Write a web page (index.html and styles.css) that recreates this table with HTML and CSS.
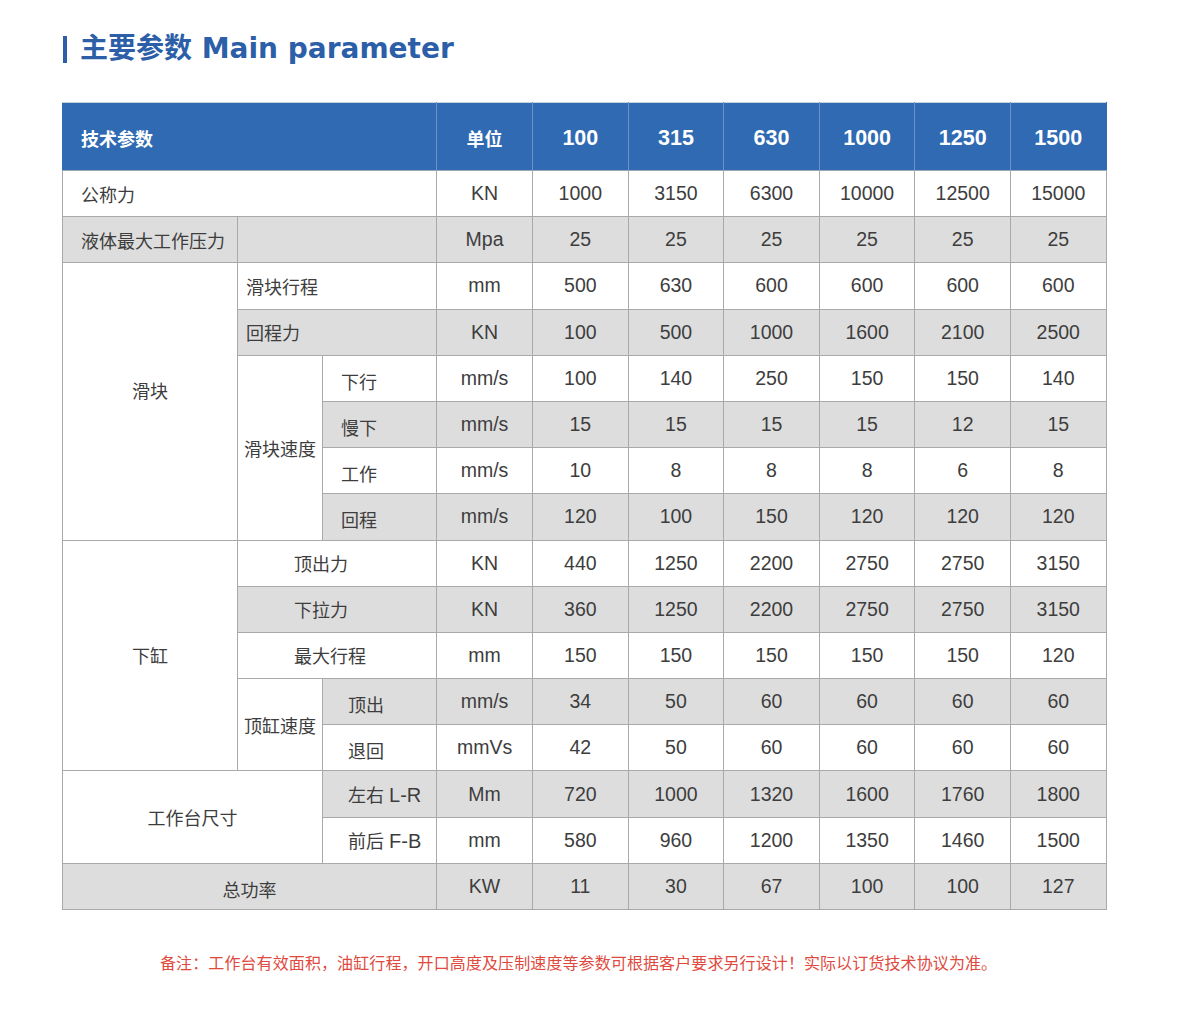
FILE: index.html
```html
<!DOCTYPE html>
<html lang="zh-CN">
<head>
<meta charset="utf-8">
<title>主要参数 Main parameter</title>
<link rel="stylesheet" href="styles.css">
</head>
<body>
<div class="page">
  <h1 class="title"><span class="bar"></span><span class="title-text">主要参数 Main parameter</span></h1>
  <table class="params">
    <colgroup>
      <col class="c1"><col class="c2"><col class="c3"><col class="cu">
      <col class="cv"><col class="cv"><col class="cv"><col class="cv"><col class="cv"><col class="cv">
    </colgroup>
    <thead>
      <tr>
        <th colspan="3" class="l19 cjk">技术参数</th>
        <th class="cjk">单位</th><th>100</th><th>315</th><th>630</th><th>1000</th><th>1250</th><th>1500</th>
      </tr>
    </thead>
    <tbody>
      <tr>
        <td colspan="3" class="l19 cjk">公称力</td>
        <td>KN</td><td>1000</td><td>3150</td><td>6300</td><td>10000</td><td>12500</td><td>15000</td>
      </tr>
      <tr class="g">
        <td class="l19 cjk">液体最大工作压力</td><td colspan="2"></td>
        <td>Mpa</td><td>25</td><td>25</td><td>25</td><td>25</td><td>25</td><td>25</td>
      </tr>
      <tr>
        <td rowspan="6" class="span raise cjk">滑块</td>
        <td colspan="2" class="l9 cjk">滑块行程</td>
        <td>mm</td><td>500</td><td>630</td><td>600</td><td>600</td><td>600</td><td>600</td>
      </tr>
      <tr class="g">
        <td colspan="2" class="l9 cjk">回程力</td>
        <td>KN</td><td>100</td><td>500</td><td>1000</td><td>1600</td><td>2100</td><td>2500</td>
      </tr>
      <tr>
        <td rowspan="4" class="span cjk">滑块速度</td>
        <td class="l19 low cjk">下行</td>
        <td>mm/s</td><td>100</td><td>140</td><td>250</td><td>150</td><td>150</td><td>140</td>
      </tr>
      <tr class="g">
        <td class="l19 low cjk">慢下</td>
        <td>mm/s</td><td>15</td><td>15</td><td>15</td><td>15</td><td>12</td><td>15</td>
      </tr>
      <tr>
        <td class="l19 low cjk">工作</td>
        <td>mm/s</td><td>10</td><td>8</td><td>8</td><td>8</td><td>6</td><td>8</td>
      </tr>
      <tr class="g">
        <td class="l19 low cjk">回程</td>
        <td>mm/s</td><td>120</td><td>100</td><td>150</td><td>120</td><td>120</td><td>120</td>
      </tr>
      <tr>
        <td rowspan="5" class="span cjk">下缸</td>
        <td colspan="2" class="l57 cjk">顶出力</td>
        <td>KN</td><td>440</td><td>1250</td><td>2200</td><td>2750</td><td>2750</td><td>3150</td>
      </tr>
      <tr class="g">
        <td colspan="2" class="l57 cjk">下拉力</td>
        <td>KN</td><td>360</td><td>1250</td><td>2200</td><td>2750</td><td>2750</td><td>3150</td>
      </tr>
      <tr>
        <td colspan="2" class="l57 cjk">最大行程</td>
        <td>mm</td><td>150</td><td>150</td><td>150</td><td>150</td><td>150</td><td>120</td>
      </tr>
      <tr class="g">
        <td rowspan="2" class="span cjk">顶缸速度</td>
        <td class="l26 low cjk">顶出</td>
        <td>mm/s</td><td>34</td><td>50</td><td>60</td><td>60</td><td>60</td><td>60</td>
      </tr>
      <tr>
        <td class="l26 low cjk">退回</td>
        <td>mmVs</td><td>42</td><td>50</td><td>60</td><td>60</td><td>60</td><td>60</td>
      </tr>
      <tr class="g">
        <td colspan="2" rowspan="2" class="span cjk">工作台尺寸</td>
        <td class="l26 cjk">左右 <span class="lat">L-R</span></td>
        <td>Mm</td><td>720</td><td>1000</td><td>1320</td><td>1600</td><td>1760</td><td>1800</td>
      </tr>
      <tr>
        <td class="l26 cjk">前后 <span class="lat">F-B</span></td>
        <td>mm</td><td>580</td><td>960</td><td>1200</td><td>1350</td><td>1460</td><td>1500</td>
      </tr>
      <tr class="g">
        <td colspan="3" class="low cjk">总功率</td>
        <td>KW</td><td>11</td><td>30</td><td>67</td><td>100</td><td>100</td><td>127</td>
      </tr>
    </tbody>
  </table>
  <p class="note">备注：工作台有效面积，油缸行程，开口高度及压制速度等参数可根据客户要求另行设计！实际以订货技术协议为准。</p>
</div>
</body>
</html>
```

FILE: styles.css
```css
html, body {
  margin: 0;
  padding: 0;
  background: #ffffff;
}

.page {
  padding: 31px 0 0 62px;
  font-family: "Liberation Sans", "Noto Sans CJK SC", sans-serif;
  color: #3d3d3d;
}

.title {
  display: flex;
  align-items: center;
  margin: 0 0 0 1px;
  height: 36px;
  color: #2c5fa8;
  font-family: "DejaVu Sans", "Noto Sans CJK SC", sans-serif;
  font-weight: bold;
  font-size: 28px;
  line-height: 36px;
}

.bar {
  display: block;
  width: 4px;
  height: 27px;
  background: #2c5fa8;
  margin-right: 13px;
}

.title-text {
  letter-spacing: 0;
}

.params {
  margin-top: 35px;
  width: 1044px;
  table-layout: fixed;
  border-collapse: collapse;
  font-size: 19.5px;
}

.c1 { width: 175px; }
.c2 { width: 85px; }
.c3 { width: 114px; }
.cu { width: 96px; }
.cv { width: 95.6px; }

.params th {
  height: 64px;
  padding: 3px 0 0 0;
  background: #2f6ab3;
  color: #ffffff;
  font-size: 21.5px;
  font-weight: bold;
  text-align: center;
  border-top: 1px solid #c9d3df;
  border-right: 1px solid #6a93c8;
  border-bottom: 1px solid #9aa6b4;
}

.params th:first-child {
  border-left: 1px solid #2f6ab3;
}

.params th:last-child {
  border-right: 1px solid #2f6ab3;
}

.params th.cjk {
  font-size: 18px;
}

.params td {
  height: 45.2px;
  padding: 0;
  text-align: center;
  border: 1px solid #a9a9a9;
  background: #ffffff;
  white-space: nowrap;
}

.params td.cjk {
  font-size: 18px;
}

.lat {
  font-size: 20px;
}

.params tr.g td {
  background: #dddddd;
}

.params tr td.span {
  background: #ffffff;
}

.params td.raise {
  padding-bottom: 22px;
}

.params td.l19,
.params th.l19 {
  text-align: left;
  padding-left: 18px;
}

.params td.l9 {
  text-align: left;
  padding-left: 8px;
}

.params td.l57 {
  text-align: left;
  padding-left: 56px;
}

.params td.l26 {
  text-align: left;
  padding-left: 25px;
}

.params td.low {
  padding-top: 5px;
  height: 40.2px;
}

.note {
  margin: 40px 0 0 98px;
  font-size: 16px;
  color: #e04a3e;
  letter-spacing: 0.1px;
}
```
